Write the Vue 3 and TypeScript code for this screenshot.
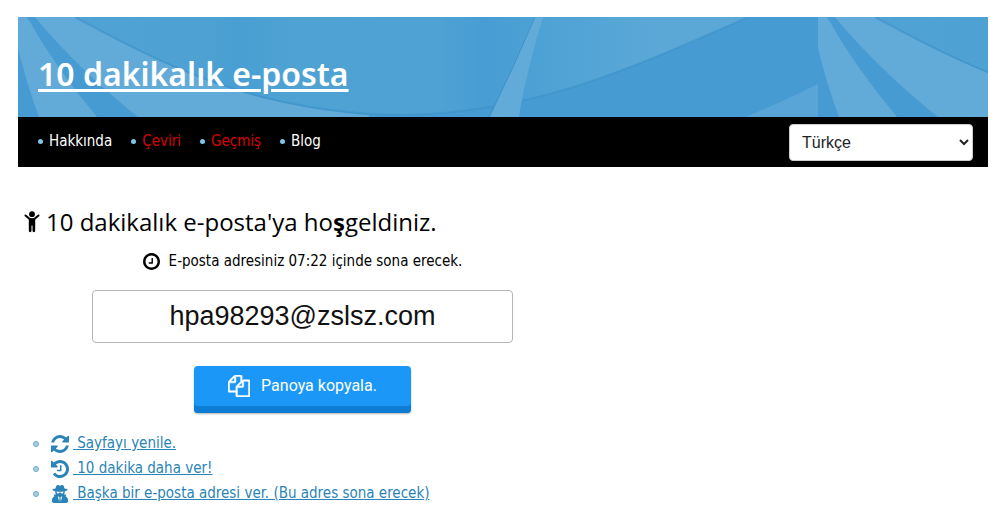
<script setup lang="ts">
import { ref } from 'vue'

interface MenuItem {
  label: string
  alert: boolean
}

interface ActionItem {
  icon: 'refresh' | 'history' | 'secret'
  label: string
}

const menu: MenuItem[] = [
  { label: 'Hakkında', alert: false },
  { label: 'Çeviri', alert: true },
  { label: 'Geçmiş', alert: true },
  { label: 'Blog', alert: false },
]

const actions: ActionItem[] = [
  { icon: 'refresh', label: 'Sayfayı yenile.' },
  { icon: 'history', label: '10 dakika daha ver!' },
  { icon: 'secret', label: 'Başka bir e-posta adresi ver. (Bu adres sona erecek)' },
]

const language = ref('tr')
const address = ref('hpa98293@zslsz.com')
const remaining = ref('07:22')

function copyAddress(): void {
  navigator.clipboard?.writeText(address.value)
}
</script>

<template>
  <div class="page">
    <header class="banner">
      <svg class="banner-art" width="100%" height="100%" aria-hidden="true">
        <defs>
          <linearGradient id="sky" x1="0" x2="1" y1="0" y2="0">
            <stop offset="0" stop-color="#4fa3d4" />
            <stop offset="0.19" stop-color="#4ea2d3" />
            <stop offset="0.24" stop-color="#499fd3" />
            <stop offset="0.33" stop-color="#4fa3d3" />
            <stop offset="0.54" stop-color="#4ea2d4" />
            <stop offset="0.61" stop-color="#479dd3" />
            <stop offset="0.68" stop-color="#4ca1d4" />
            <stop offset="0.86" stop-color="#5ba8d7" />
            <stop offset="1" stop-color="#5ba8d7" />
          </linearGradient>
          <pattern id="rays" width="800" height="100" patternUnits="userSpaceOnUse">
            <rect width="800" height="100" fill="#459bd2" />
            <path d="M57 0C150 50 240 96 385 98C510 96 600 58 730 0Z" fill="url(#sky)" />
            <path d="M0 0H9Q37 50 79 100H21Q9 68 0 31Z" fill="#62abd9" />
            <path d="M17 0H57C140 45 220 88 350 98L352 100H120Q58 50 17 0Z" fill="#62abd9" />
            <path d="M57 0C150 50 240 96 385 98C510 96 600 58 730 0" fill="none" stroke="#3c91c8" stroke-width="2" opacity="0.6" />
            <path d="M517 0Q496 50 472 100H501Q507 60 525 0Z" fill="#62abd9" />
            <path d="M517 0Q496 50 471 100" fill="none" stroke="#3c91c8" stroke-width="1" />
            <path d="M727 100Q762 86 800 67V100Z" fill="#59a5d7" />
          </pattern>
        </defs>
        <rect width="100%" height="100%" fill="url(#rays)" />
      </svg>
      <h1 class="site-title"><a href="#">10 dakikalık e-posta</a></h1>
    </header>

    <nav class="bar">
      <ul class="menu">
        <li v-for="item in menu" :key="item.label">
          <a href="#" :class="{ alert: item.alert }">{{ item.label }}</a>
        </li>
      </ul>
      <select v-model="language" class="language" aria-label="Dil">
        <option value="tr">Türkçe</option>
        <option value="en">English</option>
      </select>
    </nav>

    <main class="content">
      <h2 class="welcome">
        <svg class="child" viewBox="0 0 16 22" aria-hidden="true">
          <circle cx="8" cy="3.200" r="2.900" />
          <path d="M1.500 4.500 6 8.300H10L14.500 4.500" fill="none" stroke="currentColor" stroke-width="2" stroke-linecap="round" stroke-linejoin="round" />
          <path d="M4.800 7.500h6.400v12.300a1.300 1.300 0 0 1-2.700 0v-5.300h-1v5.300a1.300 1.300 0 0 1-2.700 0Z" />
        </svg>
        <span>10 dakikalık e-posta'ya ho<b>ş</b>geldiniz.</span>
      </h2>

      <p class="timer">
        <svg class="clock" viewBox="0 128 1536 1536" aria-hidden="true">
          <path d="M896 608v448q0 14-9 23t-23 9h-320q-14 0-23-9t-9-23v-64q0-14 9-23t23-9h224v-352q0-14 9-23t23-9h64q14 0 23 9t9 23zm416 288q0-148-73-273t-198-198-273-73-273 73-198 198-73 273 73 273 198 198 273 73 273-73 198-198 73-273zm224 0q0 209-103 385.500t-279.500 279.500-385.500 103-385.500-103-279.500-279.500-103-385.500 103-385.500 279.500-279.500 385.500-103 385.500 103 279.500 279.500 103 385.500z" />
        </svg>
        <span>E-posta adresiniz {{ remaining }} içinde sona erecek.</span>
      </p>

      <input v-model="address" class="address" type="text" readonly aria-label="E-posta adresi" />

      <button class="copy" type="button" @click="copyAddress">
        <svg class="files" viewBox="0 0 1792 1792" aria-hidden="true">
          <path d="M1696 384q40 0 68 28t28 68v1216q0 40-28 68t-68 28h-960q-40 0-68-28t-28-68v-288h-544q-40 0-68-28t-28-68v-672q0-40 20-88t48-76l408-408q28-28 76-48t88-20h416q40 0 68 28t28 68v328q68-40 128-40h416zm-544 213l-299 299h299v-299zm-640-384l-299 299h299v-299zm196 647l316-316v-416h-384v416q0 40-28 68t-68 28h-416v640h512v-256q0-40 20-88t48-76zm956 804v-1152h-384v416q0 40-28 68t-68 28h-416v640h896z" stroke="currentColor" stroke-width="40" />
        </svg>
        <span>Panoya kopyala.</span>
      </button>

      <ul class="actions">
        <li v-for="action in actions" :key="action.icon">
          <a href="#">
            <svg v-if="action.icon === 'refresh'" viewBox="0 128 1536 1536" aria-hidden="true">
              <path d="M1511 1056q0 5-1 7-64 268-268 434.500t-478 166.500q-146 0-282.500-55t-243.500-157l-129 129q-19 19-45 19t-45-19-19-45v-448q0-26 19-45t45-19h448q26 0 45 19t19 45-19 45l-137 137q71 66 161 102t187 36q134 0 250-65t186-179q11-17 53-117 8-23 30-23h192q13 0 22.500 9.500t9.500 22.500zm25-800v448q0 26-19 45t-45 19h-448q-26 0-45-19t-19-45 19-45l138-138q-148-137-349-137-134 0-250 65t-186 179q-11 17-53 117-8 23-30 23h-199q-13 0-22.500-9.500t-9.500-22.500v-7q65-268 270-434.500t480-166.500q146 0 284 55.500t245 156.500l130-129q19-19 45-19t45 19 19 45z" />
            </svg>
            <svg v-else-if="action.icon === 'history'" viewBox="0 128 1536 1536" aria-hidden="true">
              <path d="M1536 896q0 156-61 298t-164 245-245 164-298 61q-172 0-327-72.500t-264-204.500q-7-10-6.500-22.500t8.500-20.500l137-138q10-9 25-9 16 2 23 12 73 95 179 147t225 52q104 0 198.500-40.500t163.500-109.500 109.500-163.500 40.500-198.500-40.500-198.500-109.500-163.500-163.500-109.500-198.500-40.500q-98 0-188 35.500t-160 101.500l137 138q31 30 14 69-17 40-59 40h-448q-26 0-45-19t-19-45v-448q0-42 40-59 39-17 69 14l130 129q107-101 244.500-156.500t284.500-55.500q156 0 298 61t245 164 164 245 61 298zm-640-288v448q0 14-9 23t-23 9h-320q-14 0-23-9t-9-23v-64q0-14 9-23t23-9h224v-352q0-14 9-23t23-9h64q14 0 23 9t9 23z" />
            </svg>
            <svg v-else viewBox="0 0 18 18" aria-hidden="true">
              <path fill-rule="evenodd" d="M6.500 0C7.500 0 8.200.700 9 .700S10.500 0 11.500 0c1 0 1.600 1.800 2 3.500 2 .300 3.200.800 3.200 1.300 0 .700-1.300 1.100-2.900 1.400 0 1.400-.2 2.400-.7 3.200h2.300l-.9 1.900c1.800.7 2.600 2.200 2.600 4.700 0 1.300-.8 2-2 2h-12.200c-1.200 0-2-.7-2-2 0-2.500.8-4 2.600-4.700L2.600 9.400h2.300c-.5-.8-.7-1.800-.7-3.200C2.600 5.900 1.300 5.500 1.300 4.800c0-.5 1.200-1 3.200-1.300C4.900 1.800 5.500 0 6.500 0ZM5.500 6.500l.4 1.400c.3.900 2.200.9 2.600-.3l.5-.5.500.5c.4 1.200 2.300 1.200 2.600.3l.4-1.400c-2 .3-5 .3-7 0ZM6.800 11l1.300 5.400.5-4ZM11.200 11l-1.800 1.400.5 4Z" />
            </svg>
            <span class="label">&nbsp;{{ action.label }}</span>
          </a>
        </li>
      </ul>
    </main>
  </div>
</template>

<style>
body {
  background: #fff;
}
</style>

<style scoped>
.page {
  padding: 17px 17px 0 18px;
  color: #000;
  font-family: "DejaVu Sans Condensed", "DejaVu Sans", sans-serif;
  font-size: 15px;
}

.banner {
  position: relative;
  display: flex;
  align-items: center;
  height: 100px;
  padding: 0 20px;
  box-sizing: border-box;
  background: #459bd2;
}

.banner-art {
  position: absolute;
  inset: 0;
}

.site-title {
  position: relative;
  margin: 0;
  padding-top: 14px;
  font-family: "Noto Sans", sans-serif;
  font-size: 32px;
  font-weight: 600;
  line-height: 44px;
}

.site-title a {
  color: #fff;
  text-decoration-thickness: 3px;
  text-underline-offset: 3px;
}

.bar {
  display: flex;
  align-items: center;
  justify-content: space-between;
  height: 50px;
  padding: 0 15px 0 20px;
  background: #000;
}

.menu {
  display: flex;
  gap: 19px;
  margin: 0;
  padding: 0 0 2px;
  list-style: none;
}

.menu li {
  display: flex;
  align-items: center;
  gap: 6px;
  line-height: 20px;
}

.menu li::before {
  width: 5px;
  height: 5px;
  border-radius: 50%;
  background: #7fc4e4;
  content: "";
}

.menu a {
  color: #fff;
  text-decoration: none;
}

.menu a.alert {
  color: #d90000;
}

.language {
  width: 184px;
  height: 37px;
  padding: 0 8px;
  border: 1px solid #ccc;
  border-radius: 4px;
  background-color: #fff;
  color: #222;
  font-family: "Liberation Sans", Arial, sans-serif;
  font-size: 16px;
}

.content {
  display: flex;
  flex-direction: column;
  align-items: center;
  max-width: 569px;
  padding-top: 37px;
}

.welcome {
  display: flex;
  align-items: center;
  align-self: stretch;
  gap: 6px;
  margin: 0;
  padding-left: 6px;
  font-family: "Open Sans", sans-serif;
  font-size: 24px;
  font-weight: 400;
  line-height: 36px;
}

.child {
  width: 16px;
  height: 22px;
}

.timer {
  display: flex;
  align-items: center;
  gap: 9px;
  margin: 11px 0 18px;
  line-height: 21px;
}

.clock {
  width: 17px;
  height: 17px;
}

.address {
  width: 74%;
  height: 53px;
  box-sizing: border-box;
  padding: 0 12px;
  border: 1px solid #b5b5b5;
  border-radius: 4px;
  background: #fff;
  color: #111;
  font-family: "Liberation Sans", Arial, sans-serif;
  font-size: 27px;
  text-align: center;
}

.copy {
  display: flex;
  align-items: center;
  justify-content: center;
  gap: 11px;
  width: 217px;
  height: 47px;
  margin: 23px 0 18px;
  padding: 0 0 8px;
  border: 0;
  border-radius: 4px;
  background: #1b98f7;
  box-shadow: inset 0 -7px 0 #0c7cd5, 0 1px 2px rgba(0, 0, 0, 0.3);
  color: #fff;
  font-family: Roboto, sans-serif;
  font-size: 16px;
}

.files {
  width: 22px;
  height: 22px;
}

.actions {
  align-self: stretch;
  margin: 0;
  padding: 0 0 0 15px;
  list-style: none;
}

.actions li {
  display: flex;
  align-items: center;
  gap: 12px;
  line-height: 25px;
}

.actions li::before {
  width: 4px;
  height: 4px;
  border: 1px solid #6aa9cc;
  border-radius: 50%;
  background: #a8cfe3;
  content: "";
}

.actions a {
  display: flex;
  align-items: center;
  gap: 4px;
  color: #2a84b7;
  text-decoration: none;
}

.actions svg {
  width: 18px;
  height: 18px;
}

.label {
  text-decoration: underline;
}

svg {
  flex: none;
  fill: currentColor;
}
</style>
